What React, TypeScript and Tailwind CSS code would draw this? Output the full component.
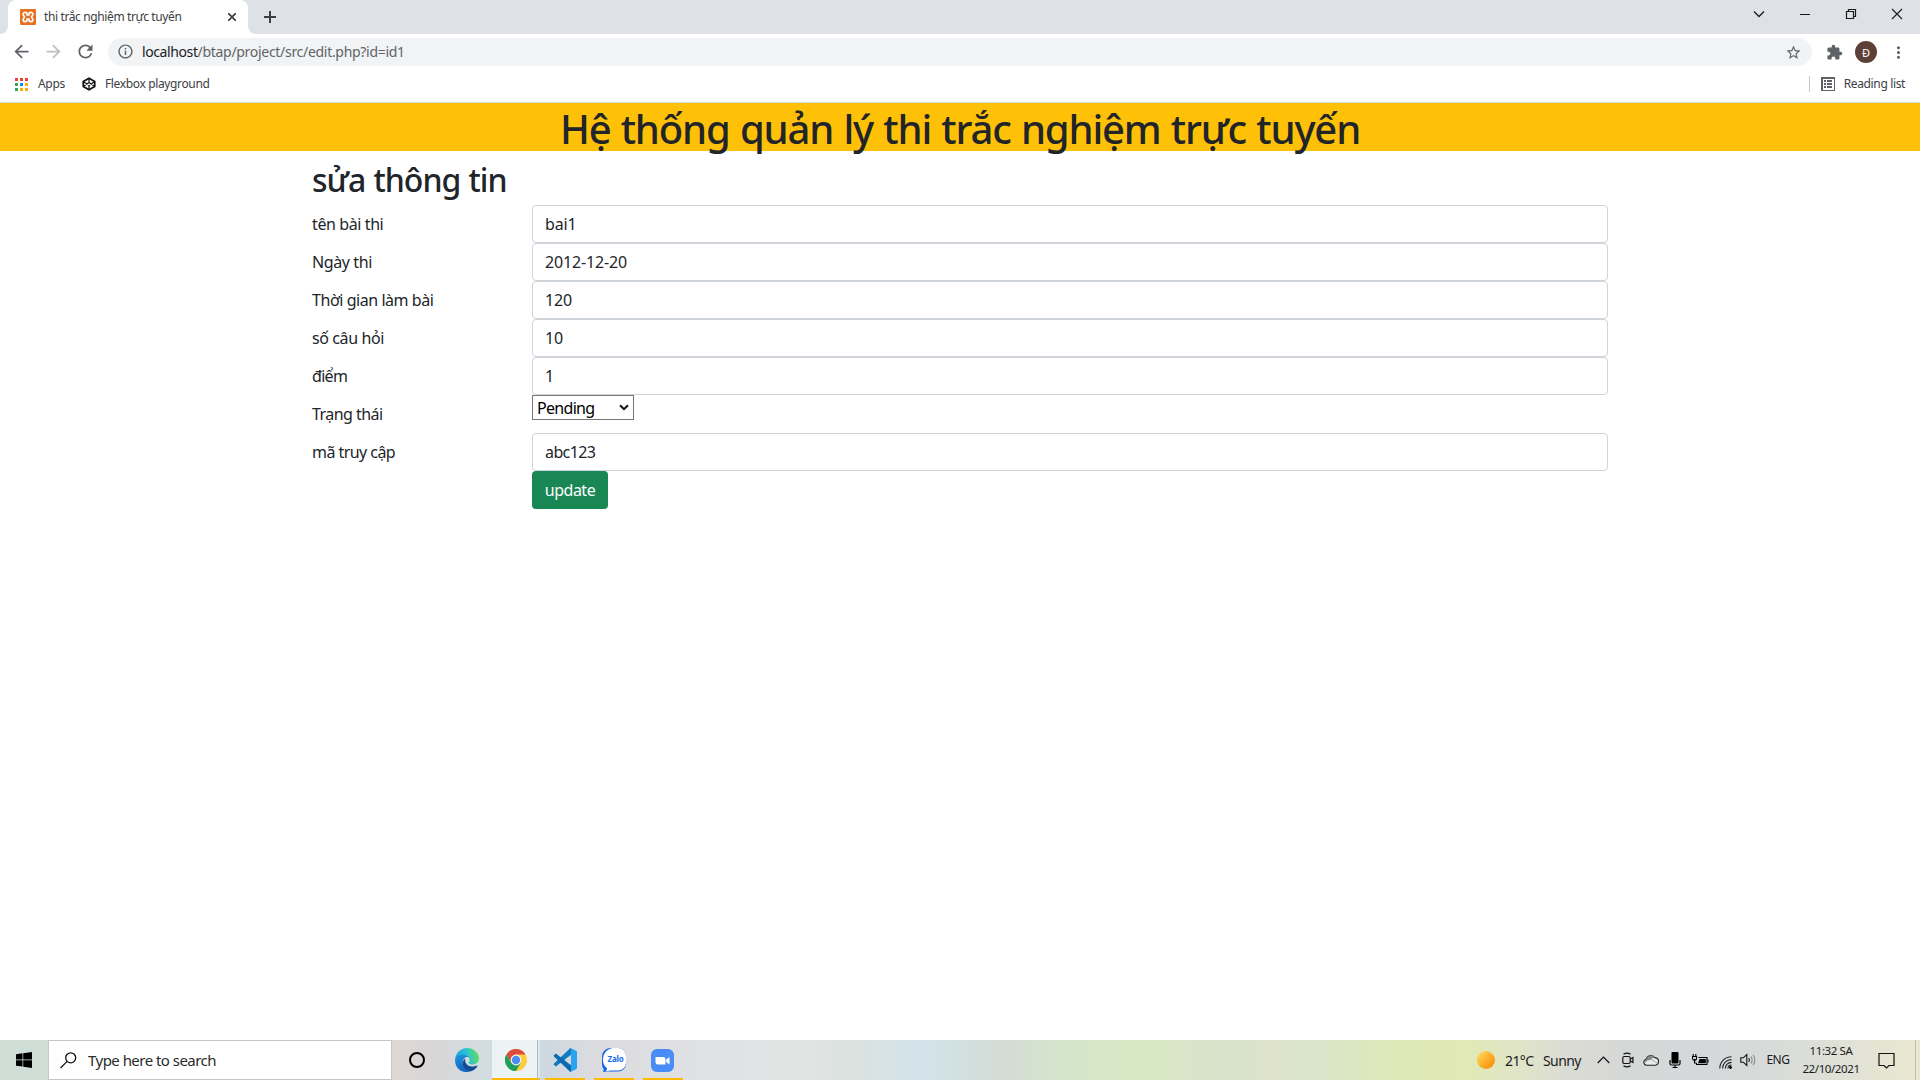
import type { ReactNode } from 'react';
import {
  MdArrowBack,
  MdArrowForward,
  MdRefresh,
  MdInfoOutline,
  MdStarBorder,
  MdExtension,
  MdMoreVert,
} from 'react-icons/md';

/* ---------- browser icons ---------- */

function XamppIcon() {
  return (
    <svg className="size-4" viewBox="0 0 16 16">
      <rect width="16" height="16" rx="1" fill="#e8701f" />
      <path
        d="M5.200 3.300C3 3.300 2.400 5.600 3.800 6.900c.9.800.9 1.400 0 2.200-1.400 1.300-.8 3.600 1.400 3.600 1.900 0 1.900-1.500 1.900-2.700h1.800c0 1.200 0 2.700 1.900 2.700 2.200 0 2.800-2.300 1.400-3.600-.9-.8-.9-1.400 0-2.200 1.400-1.300.8-3.600-1.400-3.600C8.900 3.300 8.900 4.800 8.900 6H7.100c0-1.200 0-2.700-1.900-2.700Z"
        fill="none"
        stroke="#fff"
        strokeWidth="1.700"
        strokeLinejoin="round"
      />
    </svg>
  );
}

function AppsIcon() {
  const colors = ['#ea4335', '#ea4335', '#ea4335', '#34a853', '#1a84e8', '#fbaf04', '#34a853', '#fbaf04', '#fbaf04'];
  return (
    <svg className="size-[13px]" viewBox="0 0 13 13" shapeRendering="crispEdges">
      {colors.map((c, i) => (
        <rect key={i} x={(i % 3) * 5} y={Math.floor(i / 3) * 5} width="3" height="3" fill={c} />
      ))}
    </svg>
  );
}

function CodepenIcon() {
  return (
    <svg className="size-[14px]" viewBox="0 0 14 14" fill="none" stroke="#111" strokeLinejoin="round" strokeWidth="1.200">
      <path d="M7 1.200 12.700 4.600v4.800L7 12.800 1.300 9.400V4.600Z" strokeWidth="1.800" />
      <path d="M1.300 4.600 7 8.600l5.700-4M1.300 9.400 7 5.400l5.700 4M7 1.200v4.200M7 8.600v4.200" />
    </svg>
  );
}

function ReadingListIcon() {
  return (
    <svg className="size-[14px]" viewBox="0 0 14 14" shapeRendering="crispEdges" fill="#5f6368">
      <path fillRule="evenodd" d="M0 0h14v14H0ZM1.500 1.500v11h11v-11Z" />
      <path d="M3 3h2v2H3ZM3 6h2v2H3ZM3 9h2v2H3ZM6 3h5v2H6ZM6 6h5v2H6ZM6 9h5v2H6Z" />
    </svg>
  );
}

function WindowButton({ children }: { children: ReactNode }) {
  return (
    <div className="flex h-7 w-[46px] items-center justify-center">
      <svg className="size-3" viewBox="0 0 12 12" fill="none" stroke="#1a1a1a" strokeWidth="1">
        {children}
      </svg>
    </div>
  );
}

/* ---------- taskbar icons ---------- */

function EdgeIcon() {
  return (
    <svg className="size-6" viewBox="0 0 24 24">
      <defs>
        <linearGradient id="edgeTop" x1="0" y1="0.500" x2="1" y2="0.300">
          <stop offset="0" stopColor="#1b9de0" />
          <stop offset="0.500" stopColor="#2cc3d3" />
          <stop offset="1" stopColor="#67e052" />
        </linearGradient>
        <linearGradient id="edgeLeft" x1="0" y1="0" x2="0.300" y2="1">
          <stop offset="0" stopColor="#1c96de" />
          <stop offset="1" stopColor="#1266c0" />
        </linearGradient>
      </defs>
      <path
        d="M.1 11.500C.6 5 5.700 0 12 0c7 0 12 5 12 10.600 0 3.700-2.900 6-6.200 6-2.500 0-4.200-.9-4.200-1.900 0-.6 1-1 1-2.700C14.600 9.300 11.700 7 8 7 4 7 .8 9 .1 11.500Z"
        fill="url(#edgeTop)"
      />
      <path d="M.1 12C.3 8.700 3.600 6.500 7.600 6.500c2.600 0 4.800 1.100 6 2.700C9.800 8.400 7.400 11.500 7.600 15c.2 4 3.400 8 7.400 8.600C6.500 26-.4 19.500.1 12Z" fill="url(#edgeLeft)" />
      <path
        d="M10.300 10.400C8 12 7 14.600 7.800 17.300c1.200 4.200 4.800 6.300 7.400 6.200 3.300-.8 5.700-3 7.200-5.300.3-.5-.1-.8-.6-.6-4.500 2.200-10.200.6-11.400-3.600-.4-1.300-.3-2.600-.1-3.600Z"
        fill="#134b94"
      />
    </svg>
  );
}

function ChromeIcon() {
  return (
    <svg className="size-[22px]" viewBox="0 0 22 22">
      <circle cx="11" cy="11" r="11" fill="#fccd3f" />
      <path d="M1.470 5.500A11 11 0 0 1 20.530 5.500H11L6.240 13.750Z" fill="#dd4b3e" />
      <path d="M1.470 5.500A11 11 0 0 0 11 22l4.760-8.250L6.240 13.750Z" fill="#1fa15d" />
      <circle cx="11" cy="11" r="5.400" fill="#f4f4f4" />
      <circle cx="11" cy="11" r="4.200" fill="#4b8bf4" />
    </svg>
  );
}

function VsCodeIcon() {
  return (
    <svg className="size-6" viewBox="0 0 24 24">
      <path d="M17.400.100 1 15.600c-.4.400-.4 1 0 1.400l1.200 1.100c.4.300.9.300 1.300 0L18 6.800V.100Z" fill="#0f7cc4" />
      <path d="M17.400 23.900 1 8.400C.6 8 .6 7.400 1 7l1.200-1.100c.4-.3.9-.3 1.300 0L18 17.200v6.700Z" fill="#0a6ab2" />
      <path d="M17.400.100 23.100 2.800c.6.300.9.800.9 1.400v15.600c0 .6-.3 1.100-.9 1.400l-5.700 2.700c-.5.200-1 .1-1.400-.3.700.6 2 .1 2-.9V1.300c0-1-1.300-1.500-2-.9.400-.4.900-.5 1.400-.3Z" fill="#2aa4ee" />
    </svg>
  );
}

function ZaloIcon() {
  return (
    <div className="relative flex size-6 items-center justify-center">
      <svg className="absolute inset-0 size-6" viewBox="0 0 24 24">
        <path d="M9 0h7a8 8 0 0 1 8 8v7.500a8 8 0 0 1-8 8H4.500L1 24l.8-2.600A9 9 0 0 1 0 16V8.500A8.500 8.500 0 0 1 9 0Z" fill="#1265e6" />
        <path d="M10.500 0H16a8 8 0 0 1 8 8v6.500a8 8 0 0 1-8 8H8.500c-1.600.6-3.300.6-4.700.2.900-.7 1.300-1.500 1.200-2.500C2.300 18 1 15.500 1 12 1 6 4 1.500 10.500 0Z" fill="#fff" />
      </svg>
      <span className="relative -mt-0.5 ml-[3px] text-[8px] leading-none font-bold tracking-[-0.2px] text-[#1a6ce8]">Zalo</span>
    </div>
  );
}

function ZoomIcon() {
  return (
    <svg className="size-[23px]" viewBox="0 0 23 23">
      <rect width="23" height="23" rx="6" fill="#4a8cf7" />
      <path d="M4.500 8h7.700A2.300 2.300 0 0 1 14.500 10.300V15.500H6.800A2.300 2.300 0 0 1 4.500 13.200ZM15.200 10.500 18.500 8v7.500l-3.300-2.400Z" fill="#fff" />
    </svg>
  );
}

function TaskButton({ children, className = '' }: { children: ReactNode; className?: string }) {
  return (
    <div className={`flex h-full shrink-0 flex-col items-center ${className}`}>
      <div className="flex h-[38px] items-center justify-center pt-[2px]">{children}</div>
    </div>
  );
}

/* ---------- page pieces ---------- */

const rows: { label: string; value: string; field: 'input' | 'select'; track: string }[] = [
  { label: 'tên bài thi', value: 'bai1', field: 'input', track: 'tracking-[-0.4px]' },
  { label: 'Ngày thi', value: '2012-12-20', field: 'input', track: 'tracking-[-0.4px]' },
  { label: 'Thời gian làm bài', value: '120', field: 'input', track: 'tracking-[-0.45px]' },
  { label: 'số câu hỏi', value: '10', field: 'input', track: 'tracking-[-0.4px]' },
  { label: 'điểm', value: '1', field: 'input', track: 'tracking-[-0.7px]' },
  { label: 'Trạng thái', value: 'Pending', field: 'select', track: 'tracking-[-0.55px]' },
  { label: 'mã truy cập', value: 'abc123', field: 'input', track: 'tracking-[-0.55px]' },
];

function BrowserChrome() {
  return (
    <header className="flex h-[103px] shrink-0 flex-col border-b border-[#d3d7db] bg-white text-[12px] text-[#3c4043]">
      <div className="flex h-[34px] bg-[#dee1e6]">
        <div className="flex w-2 items-end bg-white">
          <div className="h-full w-full rounded-br-lg bg-[#dee1e6]" />
        </div>
        <div className="flex w-60 items-center rounded-t-lg bg-white pl-3">
          <XamppIcon />
          <span className="ml-2 tracking-[-0.38px] whitespace-nowrap">thi trắc nghiệm trực tuyến</span>
          <svg className="mr-3 ml-auto size-2" viewBox="0 0 8 8" stroke="#3c4043" strokeWidth="1.700">
            <path d="M0 0 8 8M8 0 0 8" />
          </svg>
        </div>
        <div className="w-2 bg-white">
          <div className="h-full w-full rounded-bl-lg bg-[#dee1e6]" />
        </div>
        <svg className="mt-[11px] ml-2 size-3" viewBox="0 0 12 12" stroke="#3c4043" strokeWidth="2">
          <path d="M6 0v12M0 6h12" />
        </svg>
        <div className="ml-auto flex">
          <WindowButton>
            <path d="M1 3.500 6 8.500l5-5" strokeWidth="1.300" />
          </WindowButton>
          <WindowButton>
            <path d="M1 6.500h10" />
          </WindowButton>
          <WindowButton>
            <path d="M1.500 3.500h7v7h-7ZM3.500 3.500v-2h7v7h-2" strokeWidth="1.200" />
          </WindowButton>
          <WindowButton>
            <path d="m1 1 10 10M11 1 1 11" strokeWidth="1.100" />
          </WindowButton>
        </div>
      </div>

      <div className="flex h-9 items-center pl-[11px] text-[#5f6368]">
        <MdArrowBack className="-mt-px size-[21px]" />
        <MdArrowForward className="-mt-px ml-[11px] size-[21px] text-[#bdbfc1]" />
        <MdRefresh className="-mt-px ml-[11px] size-[21px]" />
        <div className="ml-[12px] flex h-7 w-[1704px] items-center rounded-full bg-[#f1f3f4] pr-[10px] pl-[9px] text-[14px]">
          <MdInfoOutline className="-mt-px size-[17px]" />
          <span className="mb-px ml-2 tracking-[-0.3px] whitespace-nowrap">
            <span className="tracking-[-0.4px] text-[#202124]">localhost</span>
            /btap/project/src/edit.php?id=id1
          </span>
          <MdStarBorder className="ml-auto size-[17px]" />
        </div>
        <MdExtension className="ml-[14px] size-[17px]" />
        <div className="ml-[12px] flex size-[22px] items-center justify-center rounded-full bg-[#5d4037] text-[11px] leading-none text-white">
          Đ
        </div>
        <MdMoreVert className="ml-3 size-[19px]" />
      </div>

      <div className="flex h-7 items-center pl-[15px]">
        <AppsIcon />
        <span className="ml-2.5 tracking-[-0.3px]">Apps</span>
        <div className="ml-[17px]">
          <CodepenIcon />
        </div>
        <span className="ml-[9px] tracking-[-0.36px]">Flexbox playground</span>
        <div className="ml-auto h-4 w-px bg-[#c4c7cb]" />
        <div className="ml-[11px]">
          <ReadingListIcon />
        </div>
        <span className="mr-[15px] ml-[9px] tracking-[-0.36px]">Reading list</span>
      </div>
    </header>
  );
}

function EditForm() {
  return (
    <main className="grow bg-white text-[#212529]">
      <h1 className="flex h-12 items-center justify-center bg-[#ffc107] pt-[3px] text-[40px] leading-none font-medium tracking-[-1.15px] whitespace-nowrap [word-spacing:1px]">
        Hệ thống quản lý thi trắc nghiệm trực tuyến
      </h1>
      <div className="mx-auto w-[1320px] px-3 pt-2">
        <h2 className="mb-2 h-[38px] pt-[2px] text-[32px] leading-[38px] font-medium tracking-[-1px] [word-spacing:1px]">sửa thông tin</h2>
        {rows.map((r) => (
          <div key={r.label} className="flex h-[38px] text-[16px] leading-6">
            <label className={`w-[220px] pt-[7px] ${r.track}`}>{r.label}</label>
            {r.field === 'input' ? (
              <div className="h-[38px] w-[1076px] rounded border border-[#ced4da] px-3 py-1.5 tracking-[-0.15px]">
                <span className={r.value === 'abc123' ? 'tracking-[-0.6px]' : ''}>{r.value}</span>
              </div>
            ) : (
              <div className="flex h-[25px] w-[102px] items-center justify-between border border-[#767676] pr-[4px] pl-1 text-black">
                <span className="tracking-[-0.7px]">{r.value}</span>
                <svg className="h-[7px] w-2.5" viewBox="0 0 10 7" fill="none" stroke="#111" strokeWidth="2">
                  <path d="m1 1.200 4 4 4-4" />
                </svg>
              </div>
            )}
          </div>
        ))}
        <button className="ml-[220px] flex h-[38px] w-[76px] items-center justify-center rounded bg-[#198754] text-[16px] tracking-[-0.5px] text-white">
          update
        </button>
      </div>
    </main>
  );
}

function Taskbar() {
  return (
    <footer className="flex h-10 shrink-0 bg-[linear-gradient(90deg,#cfdfd8_0px,#cfdfd8_48px,#dfd7d3_391px,#d8d6d8_440px,#d3dde0_480px,#cfd8df_545px,#dcdcdf_600px,#e0e1e3_700px,#e2e4e4_800px,#dbe2e0_850px,#d3e3ea_918px,#d0e1df_960px,#d4dbd6_1000px,#d5e5cb_1060px,#d9e8c3_1150px,#d8e3cc_1220px,#dee2cb_1280px,#d9e4cb_1315px,#dde8bb_1380px,#e1eab3_1460px,#e0e5c8_1520px,#dadbd5_1570px,#d6d8d7_1620px,#d5d8da_1700px,#d8dbd8_1780px,#e0e2d6_1850px,#ebe8cf_1920px)] text-[#1b1b1b]">
      <div className="flex w-12 shrink-0 items-center justify-center">
        <svg className="size-4" viewBox="0 0 16 16">
          <path d="M0 2.200 6.500 1.300V7.600H0ZM7.200 1.200 16 0v7.600H7.200ZM0 8.300h6.500v6.300L0 13.700ZM7.200 8.300H16V16l-8.800-1.200Z" fill="#000" />
        </svg>
      </div>
      <div className="flex w-[344px] shrink-0 items-center border border-[#c6c8c8] bg-white pl-[11px]">
        <svg className="size-[17px]" viewBox="0 0 17 17" fill="none" stroke="#111" strokeWidth="1.300">
          <circle cx="10.700" cy="5.800" r="5" />
          <path d="M7.100 9.400.5 16" />
        </svg>
        <span className="ml-[11px] text-[15px] tracking-[-0.53px] text-[#2b2b2b]">Type here to search</span>
      </div>
      <TaskButton className="w-[49px]">
        <div className="size-4 rounded-full border-[2.500px] border-black" />
      </TaskButton>
      <TaskButton className="w-[51px]">
        <EdgeIcon />
      </TaskButton>
      <div className="flex">
        <TaskButton className="w-[45px] border-b-2 border-[#ffb900] bg-[#edf3f5] pl-[3px]">
          <ChromeIcon />
        </TaskButton>
        <div className="w-[3px] border-b-2 border-l border-b-[#ffb900] border-l-[#a9bcc6] bg-[#dfe8ec]" />
      </div>
      <TaskButton className="ml-[5px] w-10 border-b-2 border-[#ffb900]">
        <VsCodeIcon />
      </TaskButton>
      <TaskButton className="ml-[9px] w-10 border-b-2 border-[#ffb900]">
        <ZaloIcon />
      </TaskButton>
      <TaskButton className="ml-[9px] w-10 border-b-2 border-[#ffb900] pr-px">
        <ZoomIcon />
      </TaskButton>

      <div className="ml-auto flex items-center">
        <div className="size-[18px] rounded-full bg-[linear-gradient(135deg,#ffd75e_10%,#fbb02c_50%,#f58a07_95%)]" />
        <span className="ml-2.5 w-[38px] pt-px text-[14px] tracking-[-0.6px]">21°C</span>
        <span className="w-[54px] pt-px text-[14px] tracking-[-0.6px]">Sunny</span>
        <svg className="h-2 w-[13px]" viewBox="0 0 13 8" fill="none" stroke="#111" strokeWidth="1.200">
          <path d="M.7 7 6.500 1.200 12.300 7" />
        </svg>
        <svg className="ml-[12px] h-4 w-[12px]" viewBox="0 0 12 16" fill="none" stroke="#111" strokeWidth="1.200">
          <rect x=".8" y="4.500" width="7.400" height="7" rx="1.500" />
          <path d="m8.400 7 2.500-1.500v5L8.400 9M1.500 2.200Q5 0 8.500 2.200M1.500 13.800Q5 16 8.500 13.800" />
        </svg>
        <svg className="ml-[9px] h-3 w-4" viewBox="0 0 16 12">
          <path d="M3.500 11.300a3 3 0 0 1-.3-5.900A4.600 4.600 0 0 1 11.500 3.600a3.900 3.900 0 0 1 1 7.700Z" fill="#e9ebeb" stroke="#222" strokeWidth="1.100" />
          <path d="M1 8.500a3 3 0 0 1 2.200-3.100A4.600 4.600 0 0 1 11.500 3.600c-1.800.2-3 1-4 2.300C5 6 3 7 2 9Z" fill="#888" />
          <path d="M8 5.200 14 9" stroke="#999" strokeWidth=".8" />
        </svg>
        <svg className="ml-[10px] h-4 w-3" viewBox="0 0 12 16" fill="none" stroke="#000">
          <rect x="2.500" y="0" width="7" height="11.500" rx="1" fill="#000" stroke="none" />
          <path d="M1 8v3.500q0 1.500 1.500 1.500h7q1.500 0 1.500-1.500V8M6 13v2.500M3.500 15.500h5" strokeWidth="1.200" />
        </svg>
        <svg className="ml-[11px] h-3 w-[17px]" viewBox="0 0 17 12" fill="none" stroke="#000">
          <path d="M6.500 3.500h8.500v7H4.500V9" strokeWidth="1.100" />
          <path d="M7.500 5h6.300v4.200H6Z" fill="#000" stroke="none" />
          <path d="M16 5.500v3M1.200 0v2.500M3.800 0v2.500M2.500 5v4h2" strokeWidth="1.100" />
          <path d="M.5 2.500h4v1.700a2 2 0 0 1-4 0Z" strokeWidth="1.100" />
        </svg>
        <svg className="mt-1 ml-[10px] size-[13px]" viewBox="0 0 13 13" fill="none" stroke="#222" strokeWidth="1.100">
          <path d="M.8 12.500C.8 6 6 .8 12.500.8M3.600 12.500c0-5 3.900-8.900 8.900-8.900M6.400 12.500c0-3.500 2.600-6.100 6.100-6.100" />
          <path d="M9 12.500a3.500 3.500 0 0 1 3.500-3.500" />
          <circle cx="11.500" cy="11.500" r="1.400" fill="#000" stroke="none" />
        </svg>
        <svg className="ml-2 h-[14px] w-[17px]" viewBox="0 0 17 14" fill="none" stroke="#111" strokeWidth="1.100">
          <path d="M.8 4.800h2.500L6.800 1.500v11L3.300 9.200H.8Z" />
          <path d="M8.800 5q1.300 2 0 4" />
          <path d="M11 3.500q2.300 3.500 0 7M13.200 2q3.300 5 0 10" stroke="#888" />
        </svg>
        <span className="ml-[9.500px] w-[33px] text-[12px] tracking-[-0.55px]">ENG</span>
        <div className="flex w-[63px] flex-col items-center pb-px text-[11.500px] leading-[18px] tracking-[-0.4px]">
          <span>11:32 SA</span>
          <span>22/10/2021</span>
        </div>
        <svg className="mr-[20.500px] ml-[15px] h-[17px] w-[17px]" viewBox="0 0 17 17" fill="none" stroke="#111" strokeWidth="1.200">
          <path d="M1 1.500h15v12H11L8.500 16 6 13.500H1Z" />
        </svg>
        <div className="mr-1 h-10 w-px bg-[#bfbfb2]" />
      </div>
    </footer>
  );
}

export default function App() {
  return (
    <div className="flex h-[1080px] w-[1920px] flex-col overflow-hidden bg-white font-['Noto_Sans',sans-serif]">
      <BrowserChrome />
      <EditForm />
      <Taskbar />
    </div>
  );
}
